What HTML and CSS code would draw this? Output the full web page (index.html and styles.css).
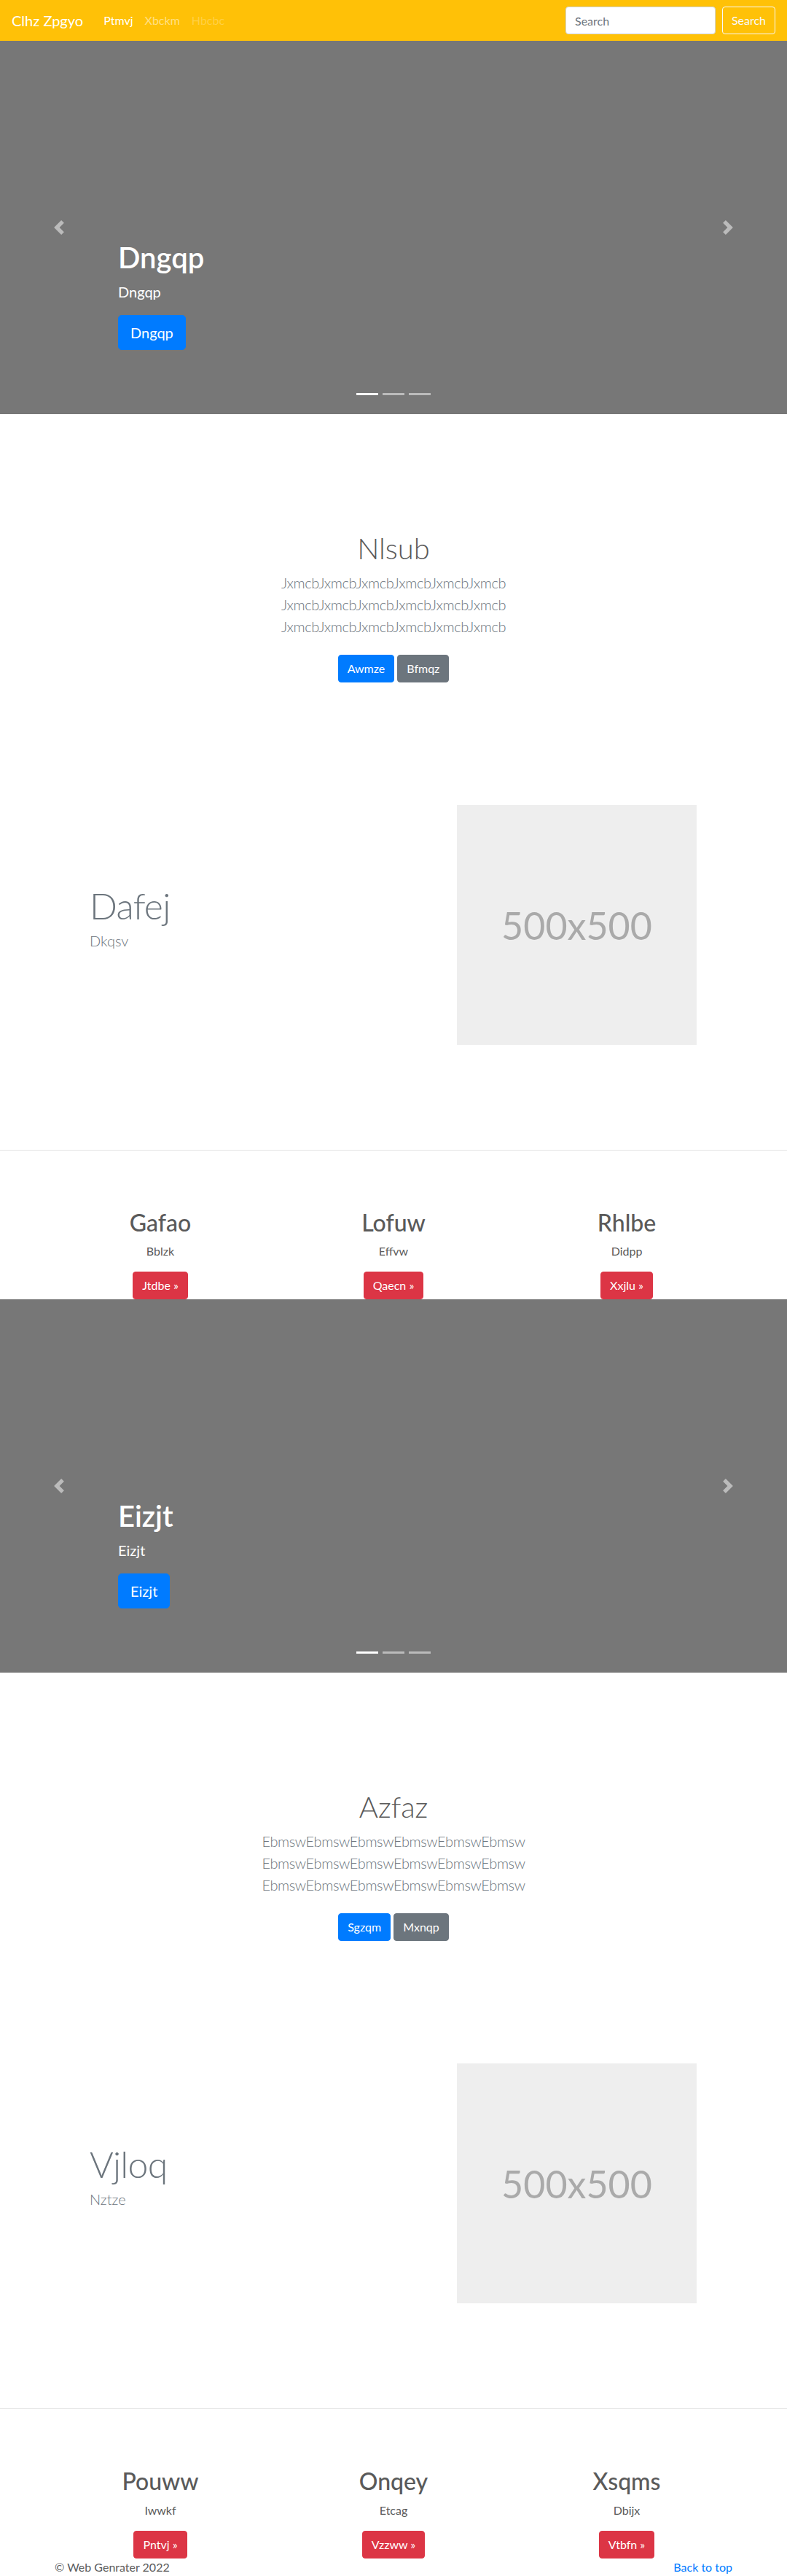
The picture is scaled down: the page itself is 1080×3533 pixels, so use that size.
FILE: index.html
```html
<!DOCTYPE html>
<html lang="en">
<head>
<meta charset="utf-8">
<title>Clhz Zpgyo</title>
<link rel="stylesheet" href="styles.css">
</head>
<body>
<nav class="navbar">
  <a class="brand" href="#">Clhz Zpgyo</a>
  <ul class="nav">
    <li><a class="nav-link active" href="#">Ptmvj</a></li>
    <li><a class="nav-link" href="#">Xbckm</a></li>
    <li><a class="nav-link disabled" href="#">Hbcbc</a></li>
  </ul>
  <form class="search">
    <input class="search-input" type="text" placeholder="Search">
    <button class="btn btn-outline" type="button">Search</button>
  </form>
</nav>

<main>
  <!-- block 1 -->
  <section class="carousel">
    <div class="caption">
      <h1 class="caption-title">Dngqp</h1>
      <p class="caption-text">Dngqp</p>
      <p class="caption-action"><a class="btn btn-lg btn-primary" href="#">Dngqp</a></p>
    </div>
    <div class="indicators">
      <span class="indicator active"></span>
      <span class="indicator"></span>
      <span class="indicator"></span>
    </div>
    <a class="control control-prev" href="#"><svg class="control-icon" viewBox="0 0 8 8" width="20" height="20"><path fill="#fff" d="M5.25 0l-4 4 4 4 1.5-1.5L4.25 4l2.5-2.5L5.25 0z"/></svg></a>
    <a class="control control-next" href="#"><svg class="control-icon" viewBox="0 0 8 8" width="20" height="20"><path fill="#fff" d="M2.75 0l-1.5 1.5L3.75 4l-2.5 2.5L2.75 8l4-4-4-4z"/></svg></a>
  </section>

  <section class="hero">
    <h1 class="hero-title">Nlsub</h1>
    <p class="lead muted hero-text">
      <span class="line">JxmcbJxmcbJxmcbJxmcbJxmcbJxmcb</span>
      <span class="line">JxmcbJxmcbJxmcbJxmcbJxmcbJxmcb</span>
      <span class="line">JxmcbJxmcbJxmcbJxmcbJxmcbJxmcb</span>
    </p>
    <div class="hero-actions">
      <a class="btn btn-primary" href="#">Awmze</a>
      <a class="btn btn-secondary" href="#">Bfmqz</a>
    </div>
  </section>

  <section class="featurette">
    <div class="featurette-text">
      <h2 class="featurette-heading">Dafej</h2>
      <p class="lead muted">Dkqsv</p>
    </div>
    <div class="placeholder">500x500</div>
  </section>

  <hr class="divider">

  <section class="marketing">
    <div class="col">
      <h2 class="col-title">Gafao</h2>
      <p class="col-text">Bblzk</p>
      <div class="col-action"><a class="btn btn-danger" href="#">Jtdbe &raquo;</a></div>
    </div>
    <div class="col">
      <h2 class="col-title">Lofuw</h2>
      <p class="col-text">Effvw</p>
      <div class="col-action"><a class="btn btn-danger" href="#">Qaecn &raquo;</a></div>
    </div>
    <div class="col">
      <h2 class="col-title">Rhlbe</h2>
      <p class="col-text">Didpp</p>
      <div class="col-action"><a class="btn btn-danger" href="#">Xxjlu &raquo;</a></div>
    </div>
  </section>

  <!-- block 2 -->
  <section class="carousel">
    <div class="caption">
      <h1 class="caption-title">Eizjt</h1>
      <p class="caption-text">Eizjt</p>
      <p class="caption-action"><a class="btn btn-lg btn-primary" href="#">Eizjt</a></p>
    </div>
    <div class="indicators">
      <span class="indicator active"></span>
      <span class="indicator"></span>
      <span class="indicator"></span>
    </div>
    <a class="control control-prev" href="#"><svg class="control-icon" viewBox="0 0 8 8" width="20" height="20"><path fill="#fff" d="M5.25 0l-4 4 4 4 1.5-1.5L4.25 4l2.5-2.5L5.25 0z"/></svg></a>
    <a class="control control-next" href="#"><svg class="control-icon" viewBox="0 0 8 8" width="20" height="20"><path fill="#fff" d="M2.75 0l-1.5 1.5L3.75 4l-2.5 2.5L2.75 8l4-4-4-4z"/></svg></a>
  </section>

  <section class="hero">
    <h1 class="hero-title">Azfaz</h1>
    <p class="lead muted hero-text">
      <span class="line">EbmswEbmswEbmswEbmswEbmswEbmsw</span>
      <span class="line">EbmswEbmswEbmswEbmswEbmswEbmsw</span>
      <span class="line">EbmswEbmswEbmswEbmswEbmswEbmsw</span>
    </p>
    <div class="hero-actions">
      <a class="btn btn-primary" href="#">Sgzqm</a>
      <a class="btn btn-secondary" href="#">Mxnqp</a>
    </div>
  </section>

  <section class="featurette">
    <div class="featurette-text">
      <h2 class="featurette-heading">Vjloq</h2>
      <p class="lead muted">Nztze</p>
    </div>
    <div class="placeholder">500x500</div>
  </section>

  <hr class="divider">

  <section class="marketing">
    <div class="col">
      <h2 class="col-title">Pouww</h2>
      <p class="col-text">Iwwkf</p>
      <div class="col-action"><a class="btn btn-danger" href="#">Pntvj &raquo;</a></div>
    </div>
    <div class="col">
      <h2 class="col-title">Onqey</h2>
      <p class="col-text">Etcag</p>
      <div class="col-action"><a class="btn btn-danger" href="#">Vzzww &raquo;</a></div>
    </div>
    <div class="col">
      <h2 class="col-title">Xsqms</h2>
      <p class="col-text">Dbijx</p>
      <div class="col-action"><a class="btn btn-danger" href="#">Vtbfn &raquo;</a></div>
    </div>
  </section>
</main>

<footer class="footer">
  <p class="copyright">&copy; Web Genrater 2022</p>
  <a class="back-top" href="#">Back to top</a>
</footer>
</body>
</html>
```
FILE: styles.css
```css
* { box-sizing: border-box; }

html, body {
  margin: 0;
  padding: 0;
}

body {
  font-family: Lato, "Open Sans", "Noto Sans", sans-serif;
  font-size: 16px;
  line-height: 1.5;
  color: #5a5a5a;
  background: #fff;
}

a { text-decoration: none; }

h1, h2, p { margin: 0; }

/* ---------- navbar ---------- */
.navbar {
  height: 56px;
  background: #ffc107;
  display: flex;
  align-items: center;
  padding: 8px 16px;
}

.brand {
  color: #fff;
  font-size: 20px;
  line-height: 30px;
  padding: 5px 0;
  margin-right: 20px;
  white-space: nowrap;
}

.nav {
  list-style: none;
  margin: 0;
  padding: 0;
  display: flex;
  flex: 1;
}

.nav-link {
  display: block;
  padding: 8px 8px;
  color: rgba(255, 255, 255, 0.5);
}
.nav-link.active { color: #fff; }
.nav-link.disabled { color: rgba(255, 255, 255, 0.25); }

.search {
  display: flex;
  align-items: center;
}

.search-input {
  width: 206px;
  height: 38px;
  padding: 6px 12px;
  font-family: inherit;
  font-size: 16px;
  line-height: 24px;
  color: #495057;
  background: #fff;
  border: 1px solid #ced4da;
  border-radius: 4px;
  margin-right: 9px;
  outline: none;
}
.search-input::placeholder { color: #6c757d; }

/* ---------- buttons ---------- */
.btn {
  display: inline-block;
  font-family: inherit;
  font-size: 16px;
  line-height: 24px;
  padding: 6px 12px;
  border: 1px solid transparent;
  border-radius: 4px;
  color: #fff;
  text-align: center;
  white-space: nowrap;
  background: transparent;
}
.btn-lg {
  font-size: 20px;
  line-height: 30px;
  padding: 8px 16px;
  border-radius: 5px;
}
.btn-primary { background: #007bff; border-color: #007bff; }
.btn-secondary { background: #6c757d; border-color: #6c757d; }
.btn-danger { background: #dc3545; border-color: #dc3545; }
.btn-outline {
  color: #f8f9fa;
  border-color: #f8f9fa;
  height: 38px;
  width: 73px;
  padding: 6px 0;
}

/* ---------- carousel ---------- */
.carousel {
  position: relative;
  height: 512px;
  background: #777;
  overflow: hidden;
}

.caption {
  position: absolute;
  left: 15%;
  right: 15%;
  bottom: 88px;
  color: #fff;
  z-index: 2;
}

.caption-title {
  font-size: 40px;
  line-height: 48px;
  font-weight: 600;
  margin-bottom: 8px;
}

.caption-text {
  font-size: 20px;
  line-height: 30px;
  margin-bottom: 17px;
}

.caption-action { line-height: 0; }

.indicators {
  position: absolute;
  left: 0;
  right: 0;
  bottom: 26px;
  display: flex;
  justify-content: center;
  gap: 6px;
  z-index: 3;
}

.indicator {
  width: 30px;
  height: 3px;
  background: #fff;
  opacity: 0.5;
}
.indicator.active { opacity: 1; }

.control {
  position: absolute;
  top: 0;
  bottom: 0;
  width: 15%;
  display: flex;
  align-items: center;
  justify-content: center;
  opacity: 0.5;
  z-index: 1;
}
.control-prev { left: 0; }
.control-next { right: 0; }
.control-icon { display: block; width: 20px; height: 20px; }

/* ---------- hero ---------- */
.hero {
  text-align: center;
  padding: 160px 0 104px;
}

.hero-title {
  font-size: 40px;
  line-height: 48px;
  font-weight: 300;
  margin-bottom: 8px;
}

.lead {
  font-size: 20px;
  line-height: 30px;
  font-weight: 300;
}
.muted { color: #6c757d; }

.hero-text { margin-bottom: 24px; letter-spacing: -0.4px; }
.hero-text .line { display: block; }

.hero-actions {
  display: flex;
  justify-content: center;
  gap: 4px;
}

/* ---------- featurette ---------- */
.featurette {
  display: flex;
  align-items: center;
  justify-content: space-between;
  padding: 64px 124px 64px 123px;
}

.featurette-heading {
  font-size: 50px;
  line-height: 1;
  font-weight: 300;
  letter-spacing: -0.8px;
  color: #6c757d;
  margin-bottom: 8px;
}

.featurette-text .lead { margin-bottom: 16px; }

.placeholder {
  width: 329px;
  height: 329px;
  background: #eee;
  color: #aaa;
  font-size: 52px;
  display: flex;
  align-items: center;
  justify-content: center;
  line-height: 1;
}

/* ---------- divider ---------- */
.divider {
  margin: 80px 0 80px;
  border: 0;
  border-top: 1px solid rgba(0, 0, 0, 0.1);
  height: 0;
}

/* ---------- marketing ---------- */
.marketing {
  width: 960px;
  margin: 0 auto;
  display: grid;
  grid-template-columns: repeat(3, 1fr);
}

.col {
  text-align: center;
  padding: 0 15px;
}

.col-title {
  font-size: 32px;
  line-height: 38.4px;
  font-weight: 500;
  margin-bottom: 8px;
}

.col-text {
  margin: 0 12px 16px;
}

.col-action {
  display: flex;
  justify-content: center;
}

/* ---------- footer ---------- */
.footer {
  width: 960px;
  margin: 0 auto;
  padding: 0 15px;
  display: flex;
  justify-content: space-between;
  align-items: baseline;
}

.back-top { color: #007bff; }
```
